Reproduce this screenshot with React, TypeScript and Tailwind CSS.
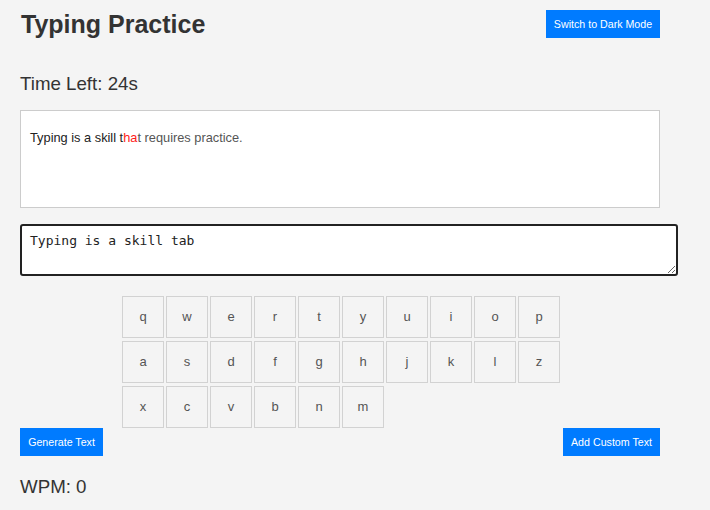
import { useState } from "react";

const rows = [
  ["q", "w", "e", "r", "t", "y", "u", "i", "o", "p"],
  ["a", "s", "d", "f", "g", "h", "j", "k", "l", "z"],
  ["x", "c", "v", "b", "n", "m"],
];

const target = "Typing is a skill that requires practice.";

export default function App() {
  const [typed, setTyped] = useState("Typing is a skill tab");

  // correct prefix, wrong chars, untyped rest
  let ok = 0;
  while (ok < typed.length && typed[ok] === target[ok]) ok++;
  const wrongEnd = Math.min(typed.length, target.length);

  const btn =
    "bg-[#007bff] text-white text-[10.67px] leading-[12px] py-2 px-0 h-[28px] whitespace-nowrap text-center";

  return (
    <div className="min-h-[510px] bg-[#f4f4f4] font-['Liberation_Sans',Arial,sans-serif] text-[#333]">
      <div className="w-[640px] ml-[20px] pt-[10px]">
        <div className="flex items-center justify-between">
          <h1 className="text-[25px] font-bold leading-[28px] pl-[1px]">Typing Practice</h1>
          <button className={btn + " w-[114px]"}>Switch to Dark Mode</button>
        </div>

        <h3 className="mt-[35px] text-[18.72px] leading-[21px]">Time Left: 24s</h3>

        <div className="mt-[16px] h-[98px] bg-white border border-[#cccccc] pl-[9px] pt-[19px] text-[12.8px] leading-[16px]">
          <span className="text-[#222]">{target.slice(0, ok)}</span>
          <span className="text-[#ff1a1a]">{target.slice(ok, wrongEnd)}</span>
          <span className="text-[#555]">{target.slice(wrongEnd)}</span>
        </div>

        <textarea
          value={typed}
          onChange={(e) => setTyped(e.target.value)}
          spellCheck={false}
          className="block mt-[16px] w-[658px] h-[52px] bg-white border-2 border-[#222] rounded-[3px] px-[8px] py-[7px] font-['DejaVu_Sans_Mono',monospace] text-[13px] leading-[16px] text-[#222] outline-none"
        />

        <div className="mt-[20px] ml-[102px] w-[438px] flex flex-wrap gap-x-[2px] gap-y-[3px]">
          {rows.flat().map((k) => (
            <div
              key={k}
              className="w-[42px] h-[42px] flex items-center justify-center border border-[#d2d2d2] bg-[#f4f4f4] text-[13px] text-[#555]"
            >
              {k}
            </div>
          ))}
        </div>

        <div className="flex justify-between">
          <button className={btn + " w-[83px]"}>Generate Text</button>
          <button className={btn + " w-[97px]"}>Add Custom Text</button>
        </div>

        <h3 className="mt-[20px] text-[18.72px] leading-[21px]">WPM: 0</h3>
      </div>
    </div>
  );
}
